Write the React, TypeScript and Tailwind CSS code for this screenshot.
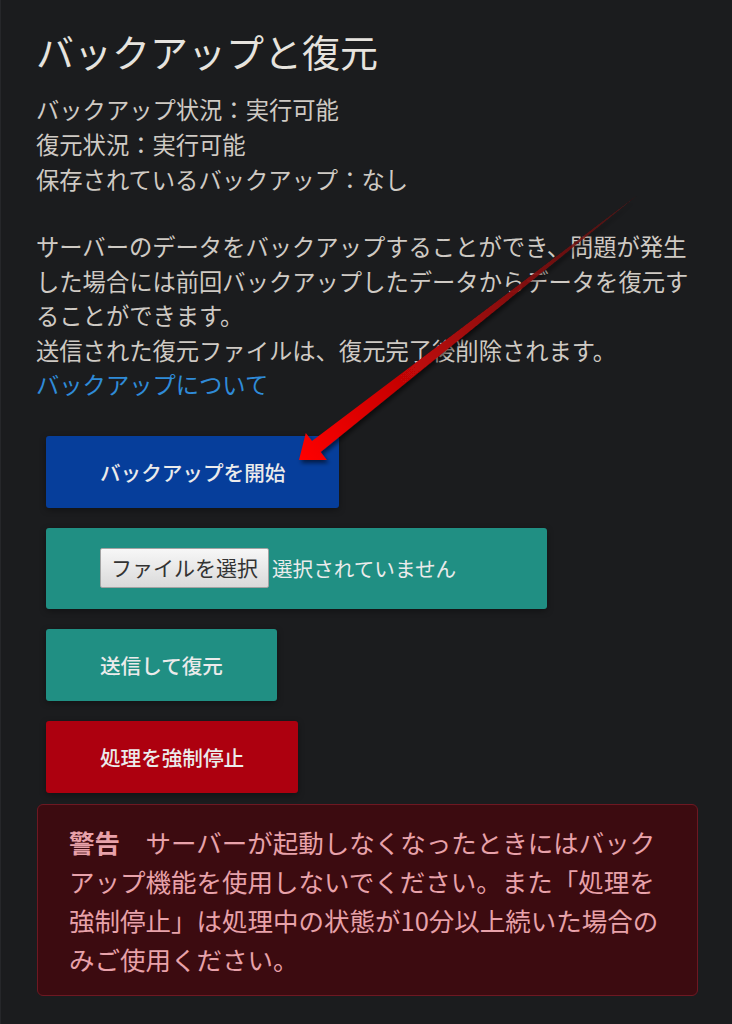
import React from "react";

function Arrow() {
  return (
    <svg
      className="absolute top-0 left-0 pointer-events-none"
      width="732"
      height="1024"
      viewBox="0 0 732 1024"
    >
      <defs>
        <linearGradient id="arrowFill" gradientUnits="userSpaceOnUse" x1="636" y1="196" x2="298" y2="460">
          <stop offset="0" stopColor="#5a1414" stopOpacity="0.75" />
          <stop offset="0.4" stopColor="#8c0c0c" />
          <stop offset="1" stopColor="#ff0000" />
        </linearGradient>
        <filter id="arrowShadow" x="-10%" y="-10%" width="130%" height="130%">
          <feDropShadow dx="2" dy="3" stdDeviation="2" floodColor="#000" floodOpacity="0.55" />
        </filter>
      </defs>
      <polygon
        points="298,460 304.8,433.1 311,441 636,195.5 319.6,452 325.8,459.9"
        fill="url(#arrowFill)"
        filter="url(#arrowShadow)"
      />
    </svg>
  );
}

function ActionButton({ title, className }: { title: string; className: string }) {
  return (
    <button
      className={
        "h-[72px] px-[54px] rounded-[3px] text-[20.6px] leading-[24px] font-medium text-[#ebebeb] shadow-[0_2px_6px_rgba(0,0,0,0.35)] " +
        className
      }
    >
      {title}
    </button>
  );
}

export default function App() {
  return (
    <div className="relative min-h-screen bg-[#1b1c1e] border-l border-[#26272a] font-['Noto_Sans_CJK_JP',sans-serif]">
      <div className="pl-[35px] pr-[34px] pt-[26px] pb-[27px]">
        <h1 className="text-[38px] leading-[49px] text-[#e6e3de]">バックアップと復元</h1>

        <div className="mt-[17px] text-[23.3px] leading-[35px] text-[#cfcac4]">
          <div>バックアップ状況：実行可能</div>
          <div>復元状況：実行可能</div>
          <div>保存されているバックアップ：なし</div>
        </div>

        <div className="mt-[32px] text-[23.3px] leading-[34.5px] text-[#cfcac4]">
          <p>サーバーのデータをバックアップすることができ、問題が発生した場合には前回バックアップしたデータからデータを復元することができます。</p>
          <p>送信された復元ファイルは、復元完了後削除されます。</p>
          <a href="#" className="text-[#2f8bd8]">バックアップについて</a>
        </div>

        <div className="mt-[34px] pl-[10px] flex flex-col items-start gap-[20px]">
          <ActionButton title="バックアップを開始" className="bg-[#063e9b]" />

          <div className="w-[501px] h-[81px] pl-[54px] flex items-center rounded-[3px] bg-[#208f83] shadow-[0_2px_6px_rgba(0,0,0,0.35)]">
            <span className="h-[40px] px-[10px] flex items-center border border-[#a3a3a3] rounded-[2px] bg-gradient-to-b from-[#f7f7f7] to-[#dadada] text-[21px] text-[#333333]">
              ファイルを選択
            </span>
            <span className="ml-[3px] text-[20.6px] text-[#ebebeb]">選択されていません</span>
          </div>

          <ActionButton title="送信して復元" className="bg-[#208f83]" />
          <ActionButton title="処理を強制停止" className="bg-[#ad000f]" />
        </div>

        <div className="mt-[11px] ml-[1px] border border-[#6e1822] rounded-[6px] bg-[#3c0b10] px-[31px] py-[17px] text-[25.5px] leading-[39px] text-[#e8a2aa]">
          <span className="font-bold">警告</span>　サーバーが起動しなくなったときにはバックアップ機能を使用しないでください。また「処理を強制停止」は処理中の状態が10分以上続いた場合のみご使用ください。
        </div>
      </div>
      <Arrow />
    </div>
  );
}
